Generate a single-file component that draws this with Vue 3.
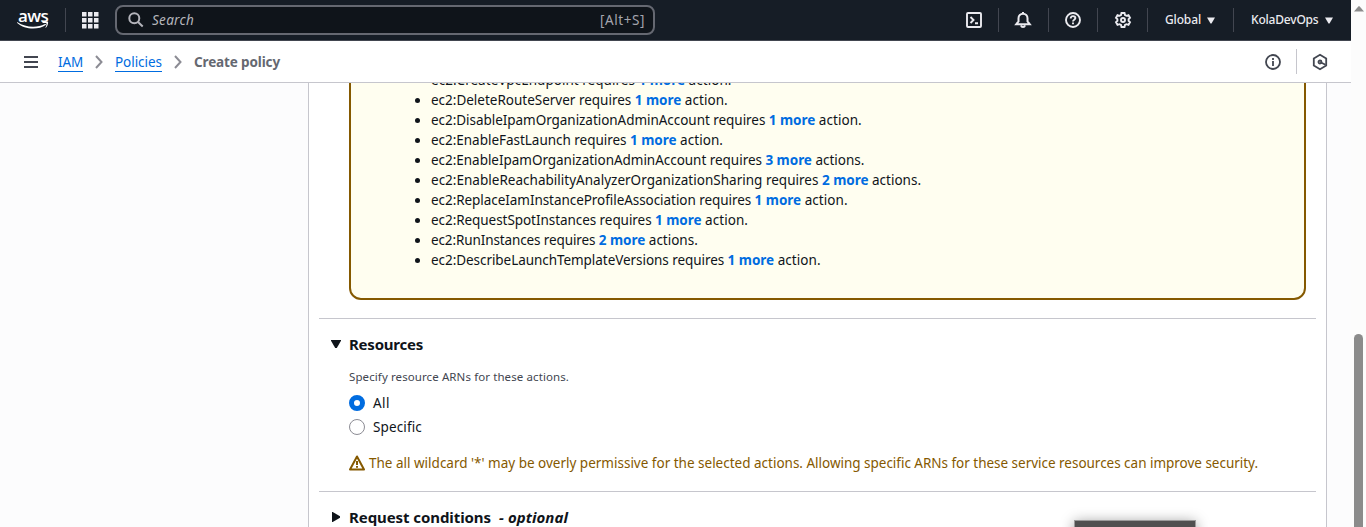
<script setup>
const actions = [
  { name: 'CreateVpcEndpoint', count: 1, width: 207.5 },
  { name: 'DeleteRouteServer', count: 1, width: 203.8 },
  { name: 'DisableIpamOrganizationAdminAccount', count: 1, width: 337.8 },
  { name: 'EnableFastLaunch', count: 1, width: 199 },
  { name: 'EnableIpamOrganizationAdminAccount', count: 3, width: 334.4 },
  { name: 'EnableReachabilityAnalyzerOrganizationSharing', count: 2, width: 391 },
  { name: 'ReplaceIamInstanceProfileAssociation', count: 1, width: 323.6 },
  { name: 'RequestSpotInstances', count: 1, width: 224 },
  { name: 'RunInstances', count: 2, width: 167.8 },
  { name: 'DescribeLaunchTemplateVersions', count: 1, width: 296.6 },
]

// Tracks text so that it fills the given width.
const vFit = {
  mounted(el, { value }) {
    const natural = el.getBoundingClientRect().width
    el.style.letterSpacing = `${(value - natural) / el.textContent.length}px`
  },
}
</script>

<template>
  <div class="page">
    <div class="window">
      <header class="topbar">
        <div class="logo">
          <span v-fit="30" class="logo-text">aws</span>
          <svg class="smile" width="32" height="10" viewBox="0 0 32 10"><path d="M.5 1.2C8.500 6.500 20 7 28 3c.8-.4 1.400.4.700 1C22 9 8 9.200.2 2c-.4-.5-.1-1 .3-.8Z" /><path d="M25.300 1.500c1.400-1 5.300-1.300 5.700-.7.4.7-.3 4.500-2.100 6-.3.2-.6.1-.4-.3.5-1.200 1.400-3.500 1-4.100-.5-.6-2.700-.4-3.900-.3-.4 0-.6-.3-.3-.6Z" /></svg>
        </div>
        <span class="sep s1"></span>
        <svg class="grid" width="17" height="17" viewBox="0 0 17 17"><path d="M0 0h4.500v4.500H0zM6 0h4.500v4.500H6zM12 0h4.500v4.500H12zM0 6h4.500v4.500H0zM6 6h4.500v4.500H6zM12 6h4.500v4.500H12zM0 12h4.500v4.500H0zM6 12h4.500v4.500H6zM12 12h4.500v4.500H12z" /></svg>
        <div class="search">
          <svg width="16" height="16" viewBox="0 0 16 16"><circle cx="6.300" cy="6.300" r="5" /><path d="m10 10 4.700 4.500" /></svg>
          <em v-fit="42">Search</em>
          <span v-fit="45" class="shortcut">[Alt+S]</span>
        </div>
        <nav class="tools">
          <div class="tool t1"><svg width="18" height="18" viewBox="0 0 18 18"><rect x="2" y="2" width="14" height="14" rx="1" /><path d="m5.500 6 3 3-3 3M10 12.200h3" /></svg></div>
          <div class="tool t2"><svg width="18" height="18" viewBox="0 0 18 18"><path d="M4.500 10.500V7.200a4.500 4.500 0 0 1 9 0v3.300l2.200 2.700H2.300ZM7 14.500c.5 2 3.500 2 4 0M9 1v2" /></svg></div>
          <div class="tool t3"><svg width="18" height="18" viewBox="0 0 18 18"><circle cx="9" cy="9" r="7" /><path d="M6.700 7.500C6.700 4.400 11.400 4.500 11.400 7.100 11.400 8.700 9 8.700 9 10.400M9 11.500v1.700" /></svg></div>
          <div class="tool t4"><svg width="18" height="18" viewBox="0 0 18 18"><path d="M7.500 2h3l.5 2 1.500.8 2-.6 1.500 2.600L14.600 8.200v1.600l1.400 1.400-1.500 2.600-2-.6-1.500.8-.5 2h-3L7 14l-1.500-.8-2 .6L2 11.200 3.400 9.800V8.200L2 6.800l1.500-2.600 2 .6L7 4Z" /><circle cx="9" cy="9" r="2" /></svg></div>
          <div class="tool t5"><span v-fit="36">Global</span><svg class="caret" width="8" height="7" viewBox="0 0 8 7"><path d="M0 .5h8L4.500 6.500h-1Z" /></svg></div>
          <div class="tool t6"><span v-fit="67.500">KolaDevOps</span><svg class="caret" width="8" height="7" viewBox="0 0 8 7"><path d="M0 .5h8L4.500 6.500h-1Z" /></svg></div>
        </nav>
      </header>

      <div class="crumbs">
        <svg class="menu" width="14" height="12" viewBox="0 0 14 12"><path d="M0 1h14M0 6h14M0 11h14" /></svg>
        <a v-fit="25" class="iam">IAM</a>
        <svg class="chev" width="8" height="14" viewBox="0 0 8 14"><path d="m1 1 5.500 6L1 13" /></svg>
        <a v-fit="47">Policies</a>
        <svg class="chev" width="8" height="14" viewBox="0 0 8 14"><path d="m1 1 5.500 6L1 13" /></svg>
        <b v-fit="86">Create policy</b>
        <div class="page-tools">
          <svg width="18" height="18" viewBox="0 0 18 18"><circle cx="9" cy="9" r="7" /><path d="M9 5v1.900M9 8v5" /></svg>
          <span class="rule"></span>
          <svg width="18" height="18" viewBox="0 0 18 18"><path d="m9 1.800 6.200 3.600v7.200L9 16.200l-6.200-3.600V5.400Z" /><circle cx="9" cy="9" r="1.500" /><path d="m9.500 9.300 5 2.500" /></svg>
        </div>
      </div>

      <main class="content">
        <section class="panel">
          <div class="alert">
            <ul>
              <li v-for="a in actions" :key="a.name">
                <i class="bullet"></i>
                <span v-fit="a.width">ec2:{{ a.name }} requires&nbsp;</span><b v-fit="46.500" class="more">{{ a.count }} more</b><span v-fit="a.count > 1 ? 52.500 : 46.500">&nbsp;{{ a.count > 1 ? 'actions.' : 'action.' }}</span>
              </li>
            </ul>
          </div>
          <div class="resources">
            <h3><svg width="10" height="10" viewBox="0 0 10 10"><path d="M0 1h10v.7L5.800 9H4.200L0 1.700Z" /></svg><span v-fit="74">Resources</span></h3>
            <div class="body">
              <p class="hint"><span v-fit="220">Specify resource ARNs for these actions.</span></p>
              <div class="option"><i class="radio checked"></i><span v-fit="17">All</span></div>
              <div class="option"><i class="radio"></i><span v-fit="49">Specific</span></div>
              <div class="warning">
                <svg width="16" height="16" viewBox="0 0 16 16"><path d="M8 1.500 15 14.500H1ZM8 6v4M8 11v1.700" /></svg>
                <span v-fit="437.500">The all wildcard '*' may be overly permissive for the selected actions.&nbsp;</span><span v-fit="451.500">Allowing specific ARNs for these service resources can improve security.</span>
              </div>
            </div>
          </div>
          <div class="conditions">
            <h3><svg width="10" height="10" viewBox="0 0 10 10"><path d="M1 0h.7L9 4.200v1.600L1.700 10H1Z" /></svg><span v-fit="142">Request conditions</span><em v-fit="69">- optional</em></h3>
          </div>
        </section>
      </main>
      <div class="popup"></div>
    </div>
    <aside class="scroll">
      <svg width="10" height="6" viewBox="0 0 10 6"><path d="M0 5.500 4.500.3h1L10 5.500Z" /></svg>
      <div class="thumb"></div>
    </aside>
  </div>
</template>

<style>
html, body { overflow: hidden; }
</style>

<style scoped>
.page { position: relative; display: flex; width: 1366px; height: 527px; overflow: hidden; background: #fcfcfd; font: 13.500px/20px "Noto Sans", "Open Sans", sans-serif; color: #0f141a; white-space: nowrap; }
.page * { box-sizing: border-box; }
svg { flex: none; fill: none; stroke: currentColor; stroke-width: 2; }
.window { width: 1351px; height: 527px; display: flex; flex-direction: column; overflow: hidden; }
.topbar { flex: none; height: 41px; background: #161d26; border-bottom: 1px solid #424650; display: flex; align-items: center; color: #ebebf0; }
.logo { width: 32px; height: 20px; margin-left: 17px; display: flex; flex-direction: column; }
.logo-text { align-self: flex-start; margin-left: 1px; height: 12px; font: 600 17px/11px "Open Sans", sans-serif; color: #fff; }
.smile { stroke: none; fill: #fff; }
.sep { width: 1px; height: 24px; background: #424650; margin-left: 16px; }
.grid { margin-left: 16px; fill: #ebebf0; stroke: none; }
.search { width: 540px; height: 30px; margin-left: 16px; border: 2px solid #656871; border-radius: 8px; background: #0f141a; display: flex; align-items: center; padding: 0 8px 0 11px; color: #b4b4bb; }
.search em { margin-left: 8px; }
.shortcut { margin-left: auto; color: #a4a4ad; }
.tools { margin-left: 298px; display: flex; height: 24px; align-items: center; font-size: 12px; font-weight: 500; }
.tool { height: 24px; display: flex; align-items: center; border-right: 1px solid #424650; }
.t1 { width: 46px; padding-left: 12px; }
.t2 { width: 50px; padding-left: 15px; }
.t3 { width: 49px; padding-left: 15px; }
.t4 { width: 50px; padding-left: 16px; }
.t5 { width: 86px; padding-left: 17px; }
.t6 { border: 0; padding-left: 17px; }
.t1 svg, .t3 svg, .t4 svg { stroke-width: 1.900; }
.caret { fill: #ebebf0; stroke: none; margin-left: 6px; }
.crumbs { flex: none; height: 42px; display: flex; align-items: center; background: #fff; border-bottom: 1px solid #c6c6cd; }
.menu { margin-left: 24px; color: #424650; }
.crumbs a { height: 20px; line-height: 20px; color: #006ce0; border-bottom: 1px solid #006ce0; }
.crumbs .iam { margin-left: 20px; }
.chev { margin: 0 12px; color: #8c8c94; }
.crumbs b { color: #656871; }
.page-tools { display: flex; align-items: center; margin-left: auto; margin-right: 22px; color: #424650; }
.page-tools svg { stroke-width: 1.800; }
.rule { width: 1px; height: 25px; background: #c6c6cd; margin: 0 14px; }
.content { height: 444px; overflow: hidden; padding-left: 308px; }
.panel { width: 1019px; height: 600px; background: #fff; border: solid #c6c6cd; border-width: 0 1px; overflow: hidden; }
.alert { height: 247px; margin: -30px 20px 18px 40px; padding: 15px 0 28px 80px; border: 2px solid #855900; border-radius: 12px; background: #fffef0; }
ul { list-style: none; margin: 0; padding: 0; }
li { height: 20px; display: flex; align-items: center; white-space: pre; }
.bullet { width: 5px; height: 5px; border-radius: 50%; background: #0f141a; margin: 0 11px 0 -16px; }
.more { color: #006ce0; }
.resources, .conditions { margin: 0 10px; border-top: 1px solid #c6c6cd; }
.resources { height: 173px; }
h3 { margin: 15px 0 0 12px; height: 20px; display: flex; align-items: center; font-size: 15px; }
h3 svg { fill: #0f141a; stroke: none; margin-right: 8px; }
h3 em { margin-left: 8px; }
.body { padding-left: 30px; }
.hint { margin: 15px 0 6px; font-size: 11.500px; line-height: 16px; color: #424650; }
.option { height: 24px; display: flex; align-items: center; }
.radio { width: 16px; height: 16px; border: 1px solid #8c8c94; border-radius: 50%; margin-right: 8px; }
.radio.checked { border: 5px solid #006ce0; background: #fff; }
.warning { display: flex; align-items: center; margin-top: 14px; color: #855900; }
.warning svg { margin-right: 4px; stroke-linejoin: round; }
.popup { position: absolute; left: 1074px; top: 520px; width: 122px; height: 30px; background: #505050; border: 1px solid #9b9b9b; box-shadow: 0 2px 14px rgba(0, 0, 0, .4); }
.scroll { width: 15px; background: #fcfcfc; display: flex; flex-direction: column; padding: 6px 0 0 3px; }
.scroll svg { fill: #8b8b8b; stroke: none; }
.thumb { width: 9px; height: 230px; flex: none; margin-top: 322px; background: #8b8b8b; border-radius: 5px; }
</style>
